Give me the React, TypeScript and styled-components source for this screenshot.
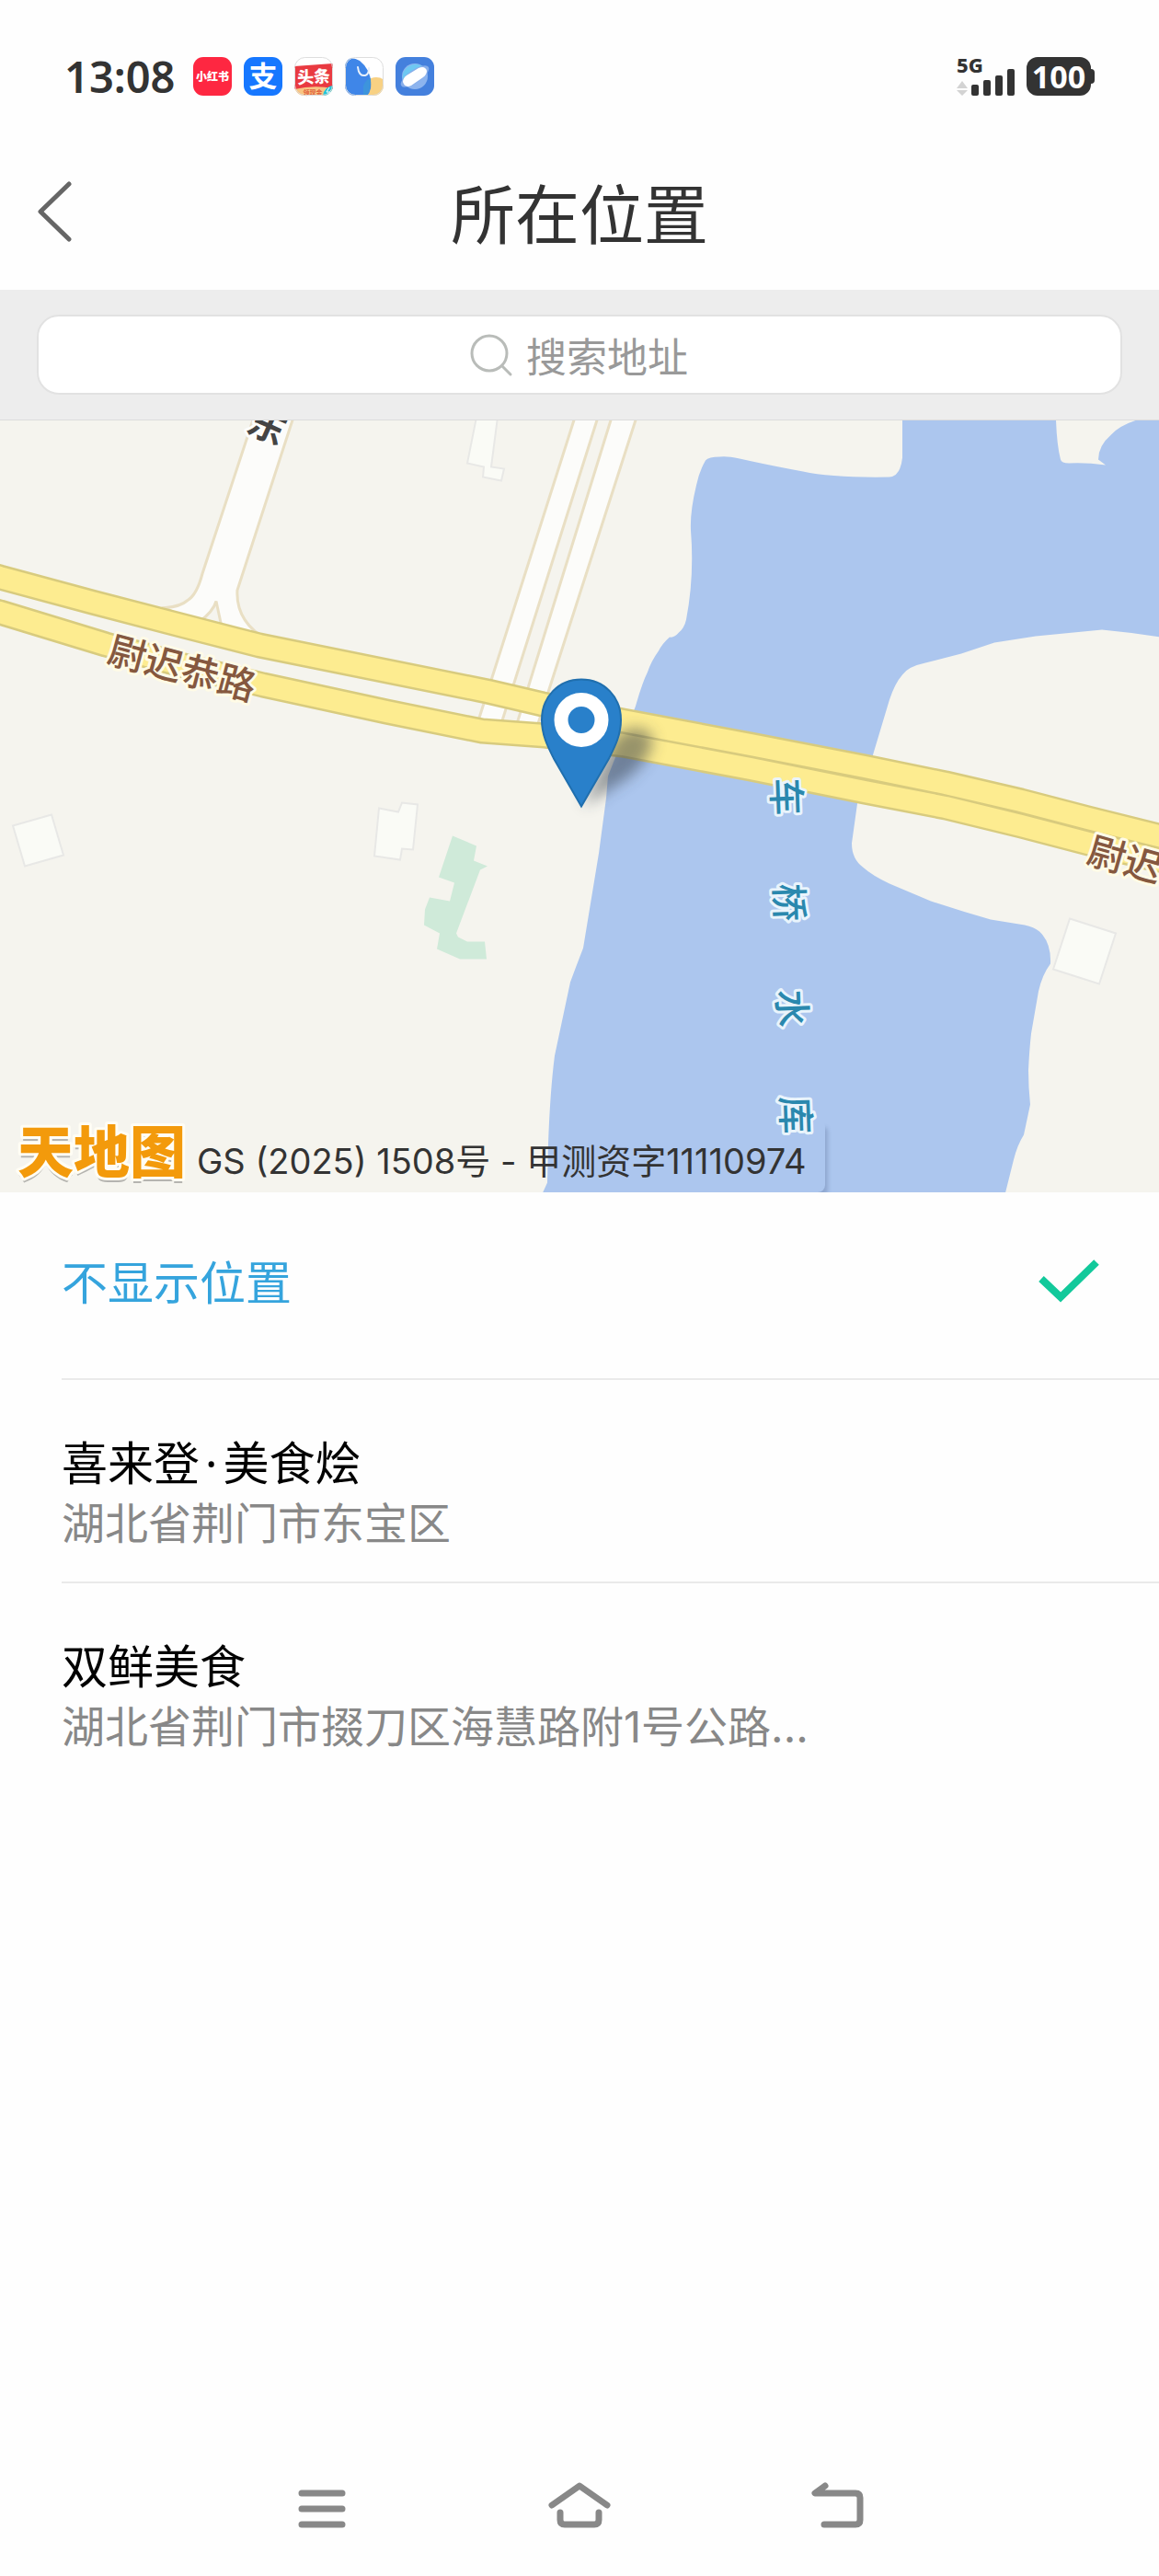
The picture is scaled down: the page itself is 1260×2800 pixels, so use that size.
import React, { useState } from 'react';
import styled, { createGlobalStyle } from 'styled-components';

const GlobalStyle = createGlobalStyle`
  *, *::before, *::after { box-sizing: border-box; }
  body {
    margin: 0;
    background: #fefefe;
    font-family: "Noto Sans CJK SC", "Noto Sans", sans-serif;
    color: #333;
  }
  button, input { font: inherit; color: inherit; }
`;

const Page = styled.div`
  display: flex;
  flex-direction: column;
  min-height: 100vh;
`;

/* ---------- status bar ---------- */

const StatusBar = styled.div`
  display: flex;
  align-items: center;
  justify-content: space-between;
  height: 153px;
  padding: 36px 70px 23px;
  font-family: "Noto Sans", sans-serif;
`;

const StatusGroup = styled.div<{ $gap: number }>`
  display: flex;
  align-items: center;
  gap: ${(p) => p.$gap}px;
`;

const Clock = styled.time`
  margin-right: 6px;
  font-size: 47px;
  line-height: 48px;
  font-weight: 600;
`;

const AppIcon = styled.svg`
  display: block;
  width: 42px;
  height: 42px;
  overflow: visible;
`;

const Signal = styled.svg`
  display: block;
  width: 64px;
  height: 42px;
  overflow: visible;
`;

const Battery = styled.div`
  display: flex;
  align-items: center;

  &::after {
    content: "";
    width: 4px;
    height: 16px;
    border-radius: 0 4px 4px 0;
    background: #333;
  }
`;

const BatteryBody = styled.span`
  width: 70px;
  height: 42px;
  border-radius: 12px;
  background: #333;
  color: #fff;
  font-size: 34px;
  line-height: 42px;
  font-weight: 700;
  text-align: center;
`;

/* ---------- title bar and search ---------- */

const Header = styled.header`
  display: grid;
  grid-template-columns: 120px 1fr 120px;
  align-items: center;
  height: 162px;
`;

const BackButton = styled.button`
  display: flex;
  align-items: center;
  height: 100%;
  padding: 0 0 8px 38px;
  border: 0;
  background: none;
`;

const Title = styled.h1`
  margin: 0;
  padding-bottom: 8px;
  font-size: 70px;
  line-height: 80px;
  font-weight: 400;
  text-align: center;
`;

const SearchBand = styled.div`
  padding: 27px 40px;
  border-bottom: 1px solid #dcdcdc;
  background: #ededed;
`;

const SearchBox = styled.label`
  display: flex;
  align-items: center;
  justify-content: center;
  gap: 14px;
  height: 87px;
  padding-right: 2px;
  border: 2px solid #e2e2e2;
  border-radius: 24px;
  background: #fff;
`;

const SearchInput = styled.input`
  field-sizing: content;
  width: 176px;
  padding: 0;
  border: 0;
  outline: 0;
  background: transparent;
  font-size: 44px;
  line-height: 60px;

  &::placeholder {
    color: #999;
    opacity: 1;
  }
`;

/* ---------- map ---------- */

const MapPanel = styled.section`
  position: relative;
  height: 839px;
  overflow: hidden;
  background: #f5f4ee;
`;

const MapCanvas = styled.svg`
  display: block;
  width: 100%;
  height: 100%;
`;

const Attribution = styled.div`
  position: absolute;
  left: 0;
  bottom: 0;
  display: flex;
  align-items: center;
  gap: 12px;
  height: 80px;
  padding: 0 20px 0 18px;
  border-radius: 0 8px 8px 0;
  box-shadow: 6px 6px 4px -3px rgba(60, 80, 120, 0.25);
  font-family: Inter, "Noto Sans CJK SC", sans-serif;
  font-size: 38px;
  line-height: 54px;
  white-space: nowrap;
`;

const Notice = styled.span`
  padding-top: 12px;
`;

const MapLogo = styled.svg`
  display: block;
  width: 184px;
  height: 76px;
  overflow: visible;
`;

const RoadLabel = styled.text`
  font-size: 41px;
  font-weight: 500;
  fill: #85583f;
  stroke: #fffbe6;
  stroke-width: 6px;
  stroke-linejoin: round;
  paint-order: stroke;
`;

const StreetLabel = styled(RoadLabel)`
  fill: #444;
  stroke: #fdfdfb;
  font-weight: 700;
`;

const WaterLabel = styled(RoadLabel)`
  fill: #2a88ae;
  stroke: #e9f4fc;
`;

/* ---------- places ---------- */

const PlaceList = styled.ul`
  flex: 1;
  margin: 0;
  padding: 0 0 0 67px;
  list-style: none;
`;

const PlaceItem = styled.li`
  border-bottom: 2px solid #eaeaea;

  &:last-child {
    border-bottom: 0;
  }
`;

const PlaceButton = styled.button<{ $single?: boolean }>`
  display: flex;
  align-items: center;
  justify-content: space-between;
  width: 100%;
  padding: ${(p) => (p.$single ? '65px 64px 77px 0' : '57px 64px 28px 0')};
  border: 0;
  background: none;
  text-align: left;
`;

const PlaceText = styled.span`
  display: flex;
  flex-direction: column;
  gap: 4px;
`;

const PlaceName = styled.span<{ $accent?: boolean }>`
  color: ${(p) => (p.$accent ? '#35a4dd' : '#000')};
  font-size: 50px;
  line-height: 60px;
`;

const Dot = styled.span`
  padding: 0 6px;
  font-family: "Noto Sans", sans-serif;
  line-height: 1;
`;

const PlaceAddress = styled.span`
  color: #888;
  font-family: Inter, "Noto Sans CJK SC", sans-serif;
  font-size: 47px;
  line-height: 70px;
`;

/* ---------- system navigation ---------- */

const SystemNav = styled.nav`
  display: flex;
  align-items: center;
  justify-content: center;
  gap: 220px;
  height: 146px;
`;

const NavButton = styled.button`
  width: 60px;
  height: 60px;
  padding: 0;
  border: 0;
  background: none;
  color: #888;

  svg {
    display: block;
    overflow: visible;
  }
`;

const stroke = {
  fill: 'none',
  stroke: 'currentColor',
  strokeLinecap: 'round' as const,
  strokeLinejoin: 'round' as const,
};

const UPPER_ROAD =
  'M-20 165L0 171L100 198L200 224L282 245L530 295L590 309L677 327L816 353L940 377L1028 395L1110 414L1183 433L1280 457';
const LOWER_ROAD =
  'M-20 204L0 209L115 244L200 267L286 288L420 317L524 338L592 343L677 353L816 379L940 404L1028 421L1110 441L1183 460L1280 483';
const WATER =
  'M981 0V41Q979 61 967 62Q905 63 873 56Q835 49 804 42Q790 39 783 40Q770 40 767 44Q760 56 757 71Q750 100 751 120Q755 170 746 217Q744 226 738 231Q733 237 728 236Q720 243 716 251Q708 262 704 274Q698 286 691 311L661 387L659 411L651 471L634 574Q627 592 620 611L603 691Q598 730 596 787L595 829L590 840H1093L1102 804Q1106 788 1113 777L1120 744Q1118 725 1118 707Q1119 685 1121 667L1129 621Q1133 603 1142 591Q1143 568 1130 556Q1124 551 1114 549L1077 543Q1045 534 1012 523L967 504Q948 495 938 486Q926 477 926 460L932 417L949 364L967 304Q973 286 981 277Q987 268 1006 264L1045 254L1081 242L1126 235L1198 228Q1230 231 1262 236V0H1236Q1217 6 1208 16Q1194 28 1194 43L1202 49Q1180 46 1162 47Q1154 47 1153 43Q1149 28 1148 0Z';

function MapDrawing() {
  return (
    <MapCanvas viewBox="0 0 1260 840" preserveAspectRatio="xMidYMid slice" role="img" aria-label="地图">
      <defs>
        <filter id="soft" x="-50%" y="-50%" width="200%" height="200%">
          <feGaussianBlur stdDeviation="8" />
        </filter>
      </defs>
      <rect width="1260" height="840" fill="#f5f4ee" />
      <path d={WATER} fill="#acc6ee" />

      <g fill="#fafbf6" stroke="#e8e8e6" strokeWidth="2">
        <path d="M518-3L508 47L526 51L525 62L545 66L548 53L534 51L541-3Z" />
        <path d="M14 441L56 429L69 473L27 485Z" />
        <path d="M412 422L433 426L437 416L454 418L449 467L437 466L435 478L407 474Z" />
        <path d="M1163 542L1213 558L1195 613L1145 597Z" />
      </g>
      <path
        d="M492 452L518 463L515 479L530 485L522 489L496 558L498 562L508 567H527L529 586H500L475 575L478 558L461 549L462 532L467 519L489 523L494 503L477 497Z"
        fill="#cfead9"
      />

      <g fill="#fcfcfa" stroke="#e9dfc4" strokeWidth="3">
        <path d="M276-3L220 167Q214 190 204 196Q196 203 180 204L240 240H292Q256 220 258 185L319-3Z" />
        <path d="M625-3L519 330H545L650-3Z" />
        <path d="M665-3L562 330H585L692-3Z" />
        <path d="M216 220Q232 208 235 197L241 225" fill="#f5f4ee" />
      </g>

      <g fill="none" strokeLinejoin="round">
        <path d={UPPER_ROAD} stroke="#d8cb7e" strokeWidth="28" />
        <path d={LOWER_ROAD} stroke="#d8cb7e" strokeWidth="28" />
        <path d={UPPER_ROAD} stroke="#fdec90" strokeWidth="23" />
        <path d={LOWER_ROAD} stroke="#fdec90" strokeWidth="23" />
      </g>

      <StreetLabel transform="translate(290 6) rotate(24)" x="-20" y="15">东</StreetLabel>
      <RoadLabel transform="translate(198 270) rotate(15)" x="-82" y="15">尉迟恭路</RoadLabel>
      <RoadLabel transform="translate(1203 472) rotate(16)" x="-20" y="15">尉迟恭路</RoadLabel>
      {[
        ['车', 855, 409],
        ['桥', 858, 524],
        ['水', 861, 639],
        ['库', 865, 755],
      ].map(([char, x, y]) => (
        <WaterLabel key={char} transform={`translate(${x} ${y}) rotate(88)`} x="-20" y="15">
          {char}
        </WaterLabel>
      ))}

      <path d="M634 420L668 346Q690 326 708 342Q714 362 684 388Z" fill="#333a44" opacity="0.5" filter="url(#soft)" />
      <path
        d="M632 282C607 282 589 301 589 326C589 343 596 356 602 368L632 420L662 368C668 356 675 343 675 326C675 301 657 282 632 282Z"
        fill="#2980ca"
        stroke="#206fae"
        strokeWidth="2"
      />
      <circle cx="632" cy="326" r="22" fill="none" stroke="#fff" strokeWidth="15" />
    </MapCanvas>
  );
}

function StatusIcons() {
  return (
    <>
      <AppIcon viewBox="0 0 42 42" role="img" aria-label="小红书">
        <rect width="42" height="42" rx="11" fill="#fe2741" />
        <text x="21" y="26" textAnchor="middle" fontSize="12" fontWeight="900" fill="#fff" fontFamily="Noto Sans CJK SC">小红书</text>
      </AppIcon>
      <AppIcon viewBox="0 0 42 42" role="img" aria-label="支付宝">
        <rect width="42" height="42" rx="11" fill="#1677ff" />
        <text x="21" y="32" textAnchor="middle" fontSize="31" fontWeight="700" fill="#fff" fontFamily="Noto Sans CJK SC">支</text>
      </AppIcon>
      <AppIcon viewBox="0 0 42 42" role="img" aria-label="头条">
        <defs>
          <clipPath id="tile"><rect width="42" height="42" rx="11" /></clipPath>
        </defs>
        <g clipPath="url(#tile)">
          <rect width="42" height="42" fill="#fff" />
          <path d="M0 10L42 7V35H0Z" fill="#e93a41" />
          <path d="M0 35Q21 30 42 34V42H0Z" fill="#f8c583" />
          <path d="M42 31A12 12 0 0 0 31 42H42Z" fill="#22c5d9" />
          <path d="M38 33L35 38H39L36 42" fill="none" stroke="#fff" strokeWidth="1" />
        </g>
        <text x="21" y="28" textAnchor="middle" fontSize="18" fontWeight="900" fill="#fff" fontFamily="Noto Sans CJK SC" transform="rotate(-3 21 21)">头条</text>
        <text x="20" y="41" textAnchor="middle" fontSize="7" fontWeight="700" fill="#e0603c" fontFamily="Noto Sans CJK SC">领现金</text>
        <rect x="0.5" y="0.5" width="41" height="41" rx="11" fill="none" stroke="#ddd" />
      </AppIcon>
      <AppIcon viewBox="0 0 42 42" aria-hidden="true">
        <g clipPath="url(#tile)">
          <rect width="42" height="42" fill="#fff" />
          <circle cx="34" cy="36" r="14" fill="#f8d183" />
          <path d="M0 3Q8-1 16 4Q30 15 28 34Q27 39 24 42H0Z" fill="#3f86e8" />
          <path d="M20 31Q23 24 28 23Q29 34 24 42H20Z" fill="#3d94dc" />
          <path d="M14 11Q15 21 22 20Q26 19 26 12" fill="none" stroke="#e8f1fb" strokeWidth="2" strokeLinecap="round" />
        </g>
        <rect x="0.5" y="0.5" width="41" height="41" rx="11" fill="none" stroke="#ddd" />
      </AppIcon>
      <AppIcon viewBox="0 0 42 42" aria-hidden="true">
        <rect width="42" height="42" rx="11" fill="#4480dd" />
        <circle cx="21" cy="21" r="14" fill="#8db4ee" />
        <path d="M8 25A14 14 0 0 1 29 10Z" fill="#6ec8f2" />
        <ellipse cx="21" cy="21" rx="18" ry="7" fill="#88aeea" transform="rotate(-35 21 21)" />
        <path d="M8 27Q8 23 12 20L25 12Q32 9 34 15Q34 19 30 22L17 31Q10 34 8 27Z" fill="#fff" />
      </AppIcon>
    </>
  );
}

const PLACES = [
  { name: <>喜来登<Dot>·</Dot>美食烩</>, address: '湖北省荆门市东宝区' },
  { name: <>双鲜美食</>, address: '湖北省荆门市掇刀区海慧路附1号公路...' },
];

function Check() {
  return (
    <svg width="68" height="50" viewBox="0 0 68 50" aria-hidden="true">
      <path d="M4 24L25 44L64 6" fill="none" stroke="#12c99b" strokeWidth="8" />
    </svg>
  );
}

export default function App() {
  const [selected, setSelected] = useState(-1);

  return (
    <Page>
      <GlobalStyle />
      <StatusBar>
        <StatusGroup $gap={13}>
          <Clock>13:08</Clock>
          <StatusIcons />
        </StatusGroup>
        <StatusGroup $gap={12}>
          <Signal viewBox="0 0 64 42" role="img" aria-label="5G">
            <text x="0" y="17" fontSize="22" fontWeight="800" fill="#333" fontFamily="Noto Sans">5G</text>
            <path d="M0 34L6 26L12 34ZM0 36H12L6 42Z" fill="#d3d3d3" />
            <g fill="#333">
              <rect x="16" y="30" width="8" height="12" rx="2" />
              <rect x="29" y="25" width="8" height="17" rx="2" />
              <rect x="42" y="20" width="8" height="22" rx="2" />
              <rect x="55" y="13" width="8" height="29" rx="2" />
            </g>
          </Signal>
          <Battery>
            <BatteryBody>100</BatteryBody>
          </Battery>
        </StatusGroup>
      </StatusBar>

      <Header>
        <BackButton aria-label="返回">
          <svg width="42" height="68" viewBox="0 0 42 68" aria-hidden="true">
            <path d="M37 4L6 34L37 64" {...stroke} stroke="#666" strokeWidth="5" />
          </svg>
        </BackButton>
        <Title>所在位置</Title>
      </Header>

      <SearchBand>
        <SearchBox>
          <svg width="48" height="48" viewBox="0 0 48 48" aria-hidden="true">
            <circle cx="22" cy="22" r="19" fill="none" stroke="#b9bcb9" strokeWidth="3" />
            <path d="M36 36L45 45" {...stroke} stroke="#b9bcb9" strokeWidth="3" />
          </svg>
          <SearchInput type="text" placeholder="搜索地址" aria-label="搜索地址" />
        </SearchBox>
      </SearchBand>

      <MapPanel>
        <MapDrawing />
        <Attribution>
          <MapLogo viewBox="0 0 184 76" role="img" aria-label="天地图">
            <g
              fontFamily="Noto Sans CJK SC"
              fontSize="61"
              fontWeight="900"
              strokeLinejoin="round"
            >
              <text x="1" y="62" fill="#9a9a96" opacity="0.7">天地图</text>
              <text x="1" y="57" fill="#f39a0b" stroke="#fffdf4" strokeWidth="6" paintOrder="stroke">天地图</text>
            </g>
          </MapLogo>
          <Notice>GS (2025) 1508号 - 甲测资字11110974</Notice>
        </Attribution>
      </MapPanel>

      <PlaceList>
        <PlaceItem>
          <PlaceButton $single onClick={() => setSelected(-1)}>
            <PlaceName $accent>不显示位置</PlaceName>
            {selected === -1 && <Check />}
          </PlaceButton>
        </PlaceItem>
        {PLACES.map((place, i) => (
          <PlaceItem key={place.address}>
            <PlaceButton onClick={() => setSelected(i)}>
              <PlaceText>
                <PlaceName>{place.name}</PlaceName>
                <PlaceAddress>{place.address}</PlaceAddress>
              </PlaceText>
              {selected === i && <Check />}
            </PlaceButton>
          </PlaceItem>
        ))}
      </PlaceList>

      <SystemNav>
        <NavButton aria-label="菜单">
          <svg width="60" height="60" viewBox="0 0 60 60" aria-hidden="true">
            <path d="M8 13H52M8 30H52M8 47H52" {...stroke} strokeWidth="7" />
          </svg>
        </NavButton>
        <NavButton aria-label="主页">
          <svg width="60" height="60" viewBox="0 0 60 60" aria-hidden="true">
            <path d="M0 26L30 5L60 26M9 34V42Q9 47 14 47H46Q51 47 51 42V34" {...stroke} strokeWidth="7" />
          </svg>
        </NavButton>
        <NavButton aria-label="返回上一页">
          <svg width="60" height="60" viewBox="0 0 60 60" aria-hidden="true">
            <path d="M17 5L6 13H50Q55 13 55 18V42Q55 47 50 47H16" {...stroke} strokeWidth="7" />
          </svg>
        </NavButton>
      </SystemNav>
    </Page>
  );
}
